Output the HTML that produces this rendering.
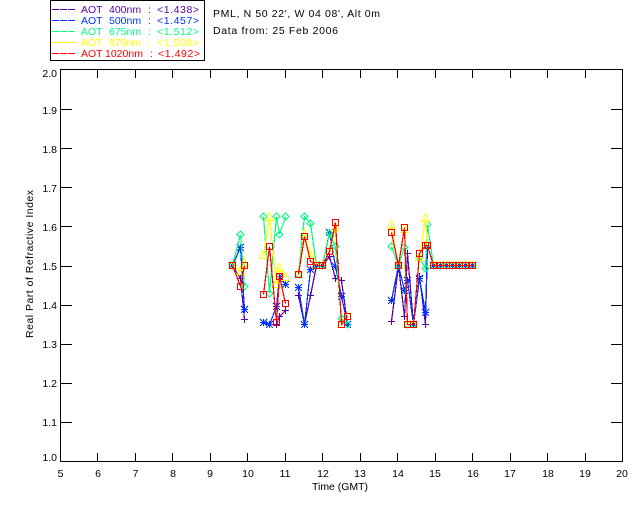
<!DOCTYPE html>
<html><head><meta charset="utf-8">
<style>
html,body{margin:0;padding:0;background:#fff;width:640px;height:512px;overflow:hidden}
svg{display:block;position:absolute;left:0;top:0}
text{font-family:"Liberation Sans",sans-serif;font-size:10.5px;fill:#000}
</style></head><body>
<svg id="s" width="640" height="512" viewBox="0 0 640 512" shape-rendering="crispEdges">
<rect x="50.5" y="0.5" width="154" height="60" fill="none" stroke="#000"/>
<g stroke-width="1">
<path d="M52 9.5h23" stroke="#5500aa" stroke-dasharray="7 1"/>
<path d="M52 20.5h23" stroke="#0033ff" stroke-dasharray="7 1"/>
<path d="M52 31.5h23" stroke="#00ff80" stroke-dasharray="7 1"/>
<path d="M52 42.5h23" stroke="#ffff00" stroke-dasharray="7 1"/>
<path d="M52 53.5h23" stroke="#ff0000" stroke-dasharray="7 1"/>
</g>
<g xml:space="preserve">
<text x="81" y="13" style="fill:#5500aa"><tspan>AOT</tspan><tspan x="109">400nm</tspan><tspan x="148">:</tspan><tspan x="157" textLength="42">&lt;1.438&gt;</tspan></text>
<text x="81" y="24" style="fill:#0033ff"><tspan>AOT</tspan><tspan x="109">500nm</tspan><tspan x="148">:</tspan><tspan x="157" textLength="42">&lt;1.457&gt;</tspan></text>
<text x="81" y="35" style="fill:#00ff80"><tspan>AOT</tspan><tspan x="109">675nm</tspan><tspan x="148">:</tspan><tspan x="157" textLength="42">&lt;1.512&gt;</tspan></text>
<text x="81" y="46" style="fill:#ffff00"><tspan>AOT</tspan><tspan x="109">870nm</tspan><tspan x="148">:</tspan><tspan x="157" textLength="42">&lt;1.508&gt;</tspan></text>
<text x="81" y="57" style="fill:#ff0000"><tspan>AOT</tspan><tspan x="105">1020nm</tspan><tspan x="150">:</tspan><tspan x="158" textLength="42">&lt;1.492&gt;</tspan></text>
</g>
<text x="213" y="17" textLength="167">PML, N 50 22', W 04 08', Alt 0m</text>
<text x="213" y="34" textLength="125">Data from: 25 Feb 2006</text>
<rect x="60.5" y="69.5" width="562" height="392" fill="none" stroke="#000"/>
<g text-anchor="end">
<text x="57" y="77">2.0</text><text x="57" y="114">1.9</text><text x="57" y="153">1.8</text><text x="57" y="192">1.7</text><text x="57" y="231">1.6</text><text x="57" y="270">1.5</text><text x="57" y="309">1.4</text><text x="57" y="348">1.3</text><text x="57" y="387">1.2</text><text x="57" y="426">1.1</text><text x="57" y="461">1.0</text>
</g>
<g text-anchor="middle">
<text x="60.5" y="477">5</text><text x="98" y="477">6</text><text x="135.5" y="477">7</text><text x="173" y="477">8</text><text x="210" y="477">9</text><text x="248" y="477">10</text><text x="285" y="477">11</text><text x="323" y="477">12</text><text x="360" y="477">13</text><text x="398" y="477">14</text><text x="435" y="477">15</text><text x="473" y="477">16</text><text x="510" y="477">17</text><text x="548" y="477">18</text><text x="585" y="477">19</text><text x="622" y="477">20</text>
<text x="340" y="490" textLength="56">Time (GMT)</text>
<text transform="translate(33 264) rotate(-90)" textLength="148">Real Part of Refractive Index</text>
</g>
<script>
var s=document.getElementById('s'),NS='http://www.w3.org/2000/svg';
function P(d,c,w){var e=document.createElementNS(NS,'path');e.setAttribute('d',d);e.setAttribute('stroke',c);e.setAttribute('fill','none');e.setAttribute('stroke-width',w||1);s.appendChild(e);}
var t='',i,x,y;
for(i=0;i<=15;i++){x=Math.round(60+37.47*i)+.5;t+='M'+x+' 70V78M'+x+' 461V453';}
for(i=1;i<10;i++){y=Math.round(70+39.1*i)+.5;t+='M61 '+y+'H72M622 '+y+'H611';}
P(t,'#000');
var X=[[232,240,244],[263,269,276,279,285],[298,304,310,316,322,329,335,341,347],[391,398,404,407,413,419,425,427,433,440,446,452,459,465,472]];
var tail=[265,265,265,265,265,265];
var D={
pu:[[265,278,319],[322,324,324,316,310],[295,324,295,265,265,256,278,280,324],[321,265,316,253,324,276,324,245,265].concat(tail)],
bl:[[265,247,309],[322,324,306,276,284],[287,324,269,265,265,232,266,296,324],[300,265,290,280,324,278,312,245,265].concat(tail)],
gr:[[265,234,286],[216,293,216,234,216],[274,216,223,265,265,233,246,318,324],[246,265,247,324,324,257,268,224,265].concat(tail)],
ye:[[265,271,263],[255,217,284,268,277],[274,233,255,265,265,251,227,324,316],[225,265,229,324,324,257,218,245,265].concat(tail)],
re:[[265,286,265],[294,246,322,276,303],[274,236,261,265,265,251,222,324,316],[232,265,227,324,324,253,245,245,265].concat(tail)]};
var C={pu:'#5500aa',bl:'#0033ff',gr:'#00ff80',ye:'#ffff00',re:'#ff0000'};
function M(k,x,y){
 if(k=='pu')return 'M'+(x-3)+' '+(y+.5)+'h7M'+(x+.5)+' '+(y-3)+'v7';
 if(k=='bl')return 'M'+(x-3)+' '+(y+.5)+'h7M'+(x+.5)+' '+(y-3)+'v7M'+(x-3)+' '+(y-3)+'l7 7M'+(x-3)+' '+(y+4)+'l7 -7M'+(x-1)+' '+(y-.5)+'h3M'+(x-1)+' '+(y+1.5)+'h3';
 if(k=='gr')return 'M'+(x+.5)+' '+(y-3)+'l3.5 3.5l-3.5 3.5l-3.5 -3.5z';
 if(k=='ye')return 'M'+(x+.5)+' '+(y-4.5)+'l4 8h-8z';
 return 'M'+(x-2.5)+' '+(y-2.5)+'h6v6h-6z';
}
['pu','bl','gr','ye','re'].forEach(function(k){
 var l='',m='';
 X.forEach(function(xs,j){xs.forEach(function(x,n){var y=D[k][j][n];l+=(n?'L':'M')+(x+.5)+' '+(y+.5);m+=M(k,x,y);});});
 P(l,C[k],1.2);P(m,C[k],1);
});
</script>
</svg>
</body></html>
